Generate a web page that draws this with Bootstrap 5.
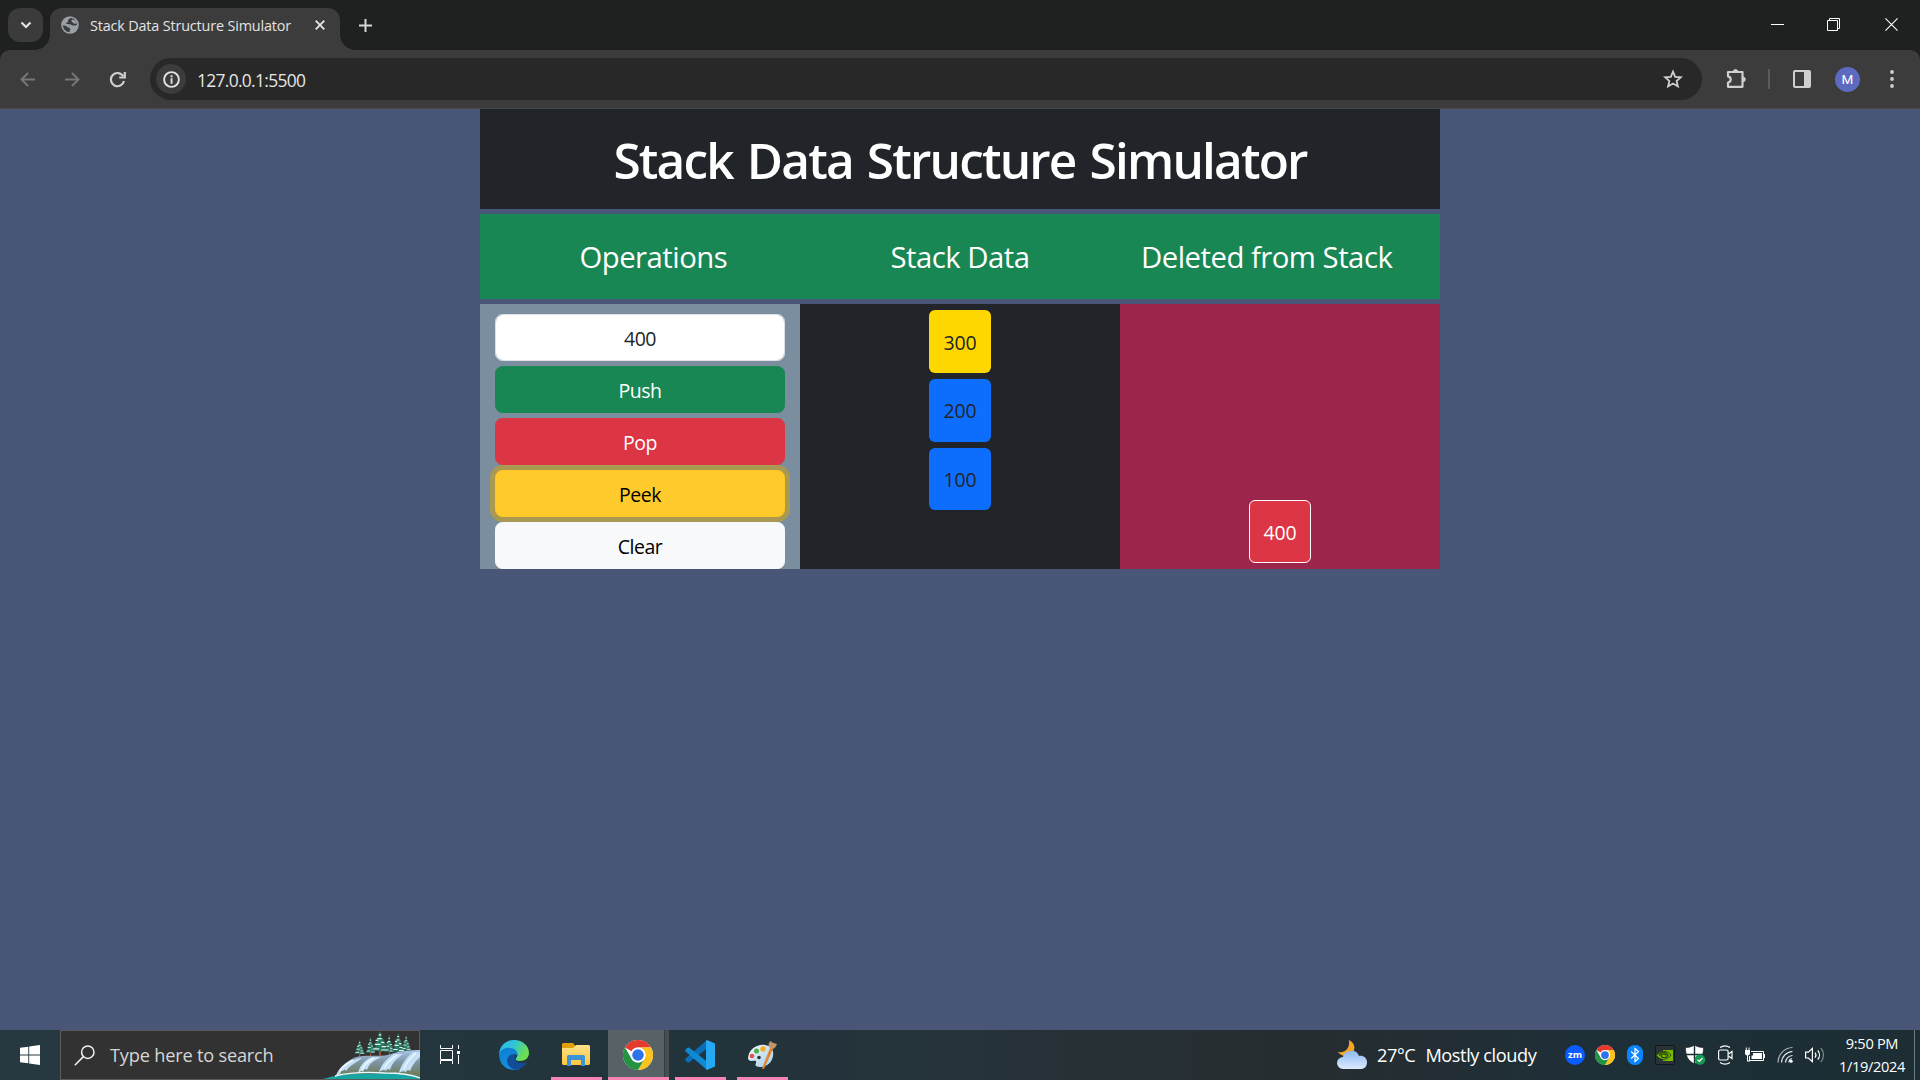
<!DOCTYPE html>
<html lang="en">
<head>
<meta charset="utf-8">
<title>Stack Data Structure Simulator</title>
<meta name="viewport" content="width=device-width, initial-scale=1">
<link href="https://cdn.jsdelivr.net/npm/bootstrap@5.3.0/dist/css/bootstrap.min.css" rel="stylesheet">
<style>
:root{font-size:20px}
body{font-family:"Open Sans","Noto Sans",sans-serif;background:#4a5678;width:1920px;height:1080px;overflow:hidden}
svg{display:block;flex:none}
.t{white-space:nowrap;display:inline-block}
/* browser chrome */
.tabstrip{height:50px;background:#1f2120;padding:8px 0 0 8px}
.tabmenu{width:35px;height:34px;border-radius:12px;background:#3b3b3b}
.tab-active{width:290px;height:42px;margin-left:7px;background:#3c3c3c;border-radius:12px 12px 0 0;padding:0 15px 8px 11px;position:relative;color:#e3e3e3}
.tab-active::before,.tab-active::after{content:"";position:absolute;bottom:0;width:15px;height:15px}
.tab-active::before{left:-15px;background:radial-gradient(circle at 0 0,transparent 14.5px,#3c3c3c 15px)}
.tab-active::after{right:-15px;background:radial-gradient(circle at 100% 0,transparent 14.5px,#3c3c3c 15px)}
.tabtitle{font-size:14.4px;line-height:20px;margin-left:11px;letter-spacing:-.16px;padding-top:1px}
.winctl{padding:10px 22px 0 0;gap:43px}
.toolbar-wrap{background:#1f2120}
.toolbar{height:59px;background:#3c3c3c;border-radius:10px 10px 0 0;border-bottom:1px solid #494949;padding:8px 21px 8px 20px}
.omni{width:1552px;height:42px;border-radius:21px;background:#282828;margin-left:24px;padding:0 19px 0 6px;color:#e6e6e6}
.siteinfo{width:30px;height:30px;border-radius:50%;background:#3c3c3c}
.url{font-size:17.4px;line-height:24px;margin-left:11px;letter-spacing:-.68px;padding-top:1px}
.avatar-m{width:25px;height:25px;border-radius:50%;background:#5c6bc0;color:#fff;font-size:13.5px;line-height:25px;font-family:Roboto,sans-serif;margin-left:24px}
/* page */
.sim{width:960px}
.sim-title{height:100px;font-size:49.5px;font-weight:600;line-height:60px;letter-spacing:-1.82px;word-spacing:3px;color:#fff;padding-top:21px}
.sim-heads{height:85px;font-size:29.3px;line-height:36px;letter-spacing:-.5px;color:#fff;padding:25px 20px 0}
.sim-body{height:265px}
.ops{background:#7b8e9f;padding:10px 15px 0}
.ops .form-control,.ops .btn{line-height:30px;height:47px;border-radius:7.5px;font-size:19.5px;letter-spacing:-.45px;padding:8px 15px 6px}
.ops .form-control{padding-top:9px}
.ops .btn-warning{background:#ffca2c;border-color:#ffc720;color:#000;box-shadow:0 0 0 5px rgba(217,164,6,.5);position:relative}
.ops .btn-light{position:relative;z-index:1}
.deleted{background:#9b254b;padding-bottom:6px}
.cellbox{width:62px;height:63px;border-radius:6px;line-height:30px;font-size:19.5px;letter-spacing:-.2px;padding-top:17px}
.cell-peek{background:gold;padding-top:18px}
.cellbox:last-child{height:62px}
.cellbox.border{height:63px;padding-top:17px}
.stackcol{padding-top:6px;gap:6px}
/* taskbar */
.taskbar{height:50px;background:linear-gradient(90deg,#263941 0,#22333b 35%,#26333a 50%,#262d30 67%,#1f2f37 82%,#1c2d34 100%);color:#fff}
.search{width:360px;height:50px;background:#323232;border:1px solid #5b5b5b;margin-left:20px;padding-left:13px;position:relative}
.search svg.art{position:absolute;right:-1px;top:0}
.searchtext{font-size:18.2px;letter-spacing:-.2px;margin-left:15px;color:#d6d6d6;padding-top:1px}
.app{height:50px;position:relative;padding-top:10px}
.app.run::after{content:"";position:absolute;left:0;right:0;bottom:0;height:3px;background:#f784b5}
.app.cur{background:linear-gradient(90deg,#576266 56px,#30393d 56px,#465054 58px)}
.weather{margin-left:10px;font-size:18.2px;letter-spacing:-.42px;padding-top:2px}
.clock{font-size:14.6px;line-height:23px;letter-spacing:-.32px;width:84px;margin-left:4px}
</style>
</head>
<body class="d-flex flex-column">
<header>
  <div class="tabstrip d-flex">
    <div class="tabmenu d-flex align-items-center justify-content-center"><svg width="12" height="8" viewBox="0 0 12 8" fill="none" stroke="#e3e3e3" stroke-width="2.200"><path d="M1.500 1.500 6 6l4.500-4.500"/></svg></div>
    <div class="tab-active d-flex align-items-center">
      <svg width="18" height="18" viewBox="0 0 18 18"><circle cx="9" cy="9" r="8.800" fill="#9aa0a8"/><path d="M10.200 1.900C8 2.300 6.800 3.600 7 5c.2 1.300-1 1.900-2.500 2 1.200 1.200 2.600 1.300 4.200 1.300 1.500 0 1.900 1.100 3 1.200 1.300.1 2.700.2 4.300-.4C15.800 5 13.400 2.300 10.200 1.900z" fill="#3c3c3c"/><path d="M11 3.500c-.8 1-.6 2.200.3 2.700 1 .4 1.100 1.300 2.300 1.500 1 .1 1.600-.2 2.200-.5C15.300 5 13.500 3.500 11 3.500z" fill="#9aa0a8"/><path d="M1.900 9.300c1.700.3 3.400.6 4.600 1.600.9.900 2.300.7 2.700 1.700.3 1.100-.6 1.700-.7 3.500C4.700 16 2 13 1.900 9.300z" fill="#3c3c3c"/></svg>
      <span class="t tabtitle">Stack Data Structure Simulator</span>
      <svg class="ms-auto" width="10" height="10" viewBox="0 0 10 10" stroke="#e3e3e3" stroke-width="1.900"><path d="M.7.7l8.600 8.600M9.300.7.7 9.300"/></svg>
    </div>
    <svg style="margin:11px 0 0 19px" width="13" height="13" viewBox="0 0 13 13" stroke="#d6d6d6" stroke-width="2"><path d="M6.500 0v13M0 6.500h13"/></svg>
    <div class="winctl ms-auto d-flex">
      <svg width="13" height="13" viewBox="0 0 13 13" stroke="#fff"><path d="M0 6.500h13"/></svg>
      <svg width="13" height="13" viewBox="0 0 13 13" stroke="#fff" fill="none"><path d="M.5 2.500h10v10H.5zM2.500 2.500v-2h10v10h-2"/></svg>
      <svg style="margin-left:2px" width="13" height="13" viewBox="0 0 14 14" stroke="#fff" stroke-width="1.200"><path d="M.5.5l13 13M13.500.5l-13 13"/></svg>
    </div>
  </div>
  <div class="toolbar-wrap"><div class="toolbar d-flex align-items-center">
    <svg width="15" height="15" viewBox="0 0 15 15" fill="none" stroke="#777" stroke-width="1.900"><path d="M15 7.500H1.500M8 1 1.500 7.500 8 14"/></svg>
    <svg style="margin-left:30px" width="15" height="15" viewBox="0 0 15 15" fill="none" stroke="#777" stroke-width="1.900"><path d="M0 7.500h13.500M7 1l6.500 6.500L7 14"/></svg>
    <svg style="margin-left:29px" width="17" height="17" viewBox="0 0 17 17" fill="none" stroke="#cfcfcf" stroke-width="2.200"><path d="M14.200 5.200A6.600 6.600 0 1 0 15 10"/><path d="M15.800 1v5.500h-5.600"/></svg>
    <div class="omni d-flex align-items-center">
      <div class="siteinfo d-flex align-items-center justify-content-center"><svg width="17" height="17" viewBox="0 0 17 17"><circle cx="8.500" cy="8.500" r="7.400" fill="none" stroke="#e3e3e3" stroke-width="1.900"/><path d="M7.600 7.300h1.900v5.400H7.600zM7.600 4.300h1.900v1.900H7.600z" fill="#e3e3e3"/></svg></div>
      <span class="t url">127.0.0.1:5500</span>
      <svg class="ms-auto" width="20" height="20" viewBox="0 0 20 20" fill="none" stroke="#cfcfcf" stroke-width="1.800"><path d="M10 2.600l2.200 5.200 5.600.5-4.200 3.700 1.300 5.500L10 14.600l-4.900 2.900L6.400 12 2.200 8.300l5.600-.5z"/></svg>
    </div>
    <svg style="margin-left:24px" width="22" height="22" viewBox="0 0 22 22" fill="none" stroke="#cfcfcf" stroke-width="2.200" stroke-linejoin="round"><path d="M2 4h14.500v14.800H2v-4.200c3.600-.6 3.600-5.600 0-6.200z"/><path d="M7 3.500a2.600 2.600 0 0 1 5 0zM17.500 9v4.800a2.500 2.500 0 0 0 0-4.800z" fill="#cfcfcf" stroke-width="1"/></svg>
    <div style="width:2px;height:20px;background:#5c5c5c;margin-left:20px"></div>
    <svg style="margin-left:23px" width="18" height="18" viewBox="0 0 18 18"><rect x="1" y="1" width="16" height="16" rx="1" fill="none" stroke="#cfcfcf" stroke-width="2"/><path d="M11 1h6v16h-6z" fill="#cfcfcf"/></svg>
    <div class="avatar-m text-center">M</div>
    <svg class="ms-auto" width="14" height="18" viewBox="0 0 14 18" fill="#cfcfcf"><circle cx="7" cy="2" r="1.900"/><circle cx="7" cy="9" r="1.900"/><circle cx="7" cy="16" r="1.900"/></svg>
  </div></div>
</header>

<main class="flex-grow-1">
  <div class="sim mx-auto">
    <div class="sim-title bg-dark text-center"><span class="t">Stack Data Structure Simulator</span></div>
    <div class="row g-0 sim-heads bg-success mt-1 text-center">
      <div class="col-4"><span class="t">Operations</span></div>
      <div class="col-4"><span class="t">Stack Data</span></div>
      <div class="col-4"><span class="t">Deleted from Stack</span></div>
    </div>
    <div class="row g-0 sim-body mt-1">
      <div class="col-4 ops">
        <div class="form-control text-center"><span class="t">400</span></div>
        <button class="btn btn-success w-100 mt-1 d-block"><span class="t">Push</span></button>
        <button class="btn btn-danger w-100 mt-1 d-block"><span class="t">Pop</span></button>
        <button class="btn btn-warning w-100 mt-1 d-block"><span class="t">Peek</span></button>
        <button class="btn btn-light w-100 mt-1 d-block"><span class="t">Clear</span></button>
      </div>
      <div class="col-4 bg-dark stackcol d-flex flex-column align-items-center">
        <div class="cellbox cell-peek text-center"><span class="t">300</span></div>
        <div class="cellbox bg-primary text-center"><span class="t">200</span></div>
        <div class="cellbox bg-primary text-center"><span class="t">100</span></div>
      </div>
      <div class="col-4 deleted d-flex flex-column align-items-center justify-content-end">
        <div class="cellbox bg-danger border border-white text-white text-center"><span class="t">400</span></div>
      </div>
    </div>
  </div>
</main>

<footer class="taskbar d-flex">
  <svg style="margin:15px 0 0 20px" width="20" height="20" viewBox="0 0 20 20" fill="#fff"><path d="M0 2.800 8.300 1.700v7.800H0zM9.200 1.500 20 0v9.500H9.200zM0 10.500h8.300v7.800L0 17.200zM9.200 10.500H20V20L9.200 18.500z"/></svg>
  <div class="search d-flex align-items-center">
    <svg width="21" height="21" viewBox="0 0 21 21" fill="none" stroke="#f2f2f2" stroke-width="1.500"><circle cx="13.800" cy="7.200" r="6.200"/><path d="M9.400 11.600.8 20.200"/></svg>
    <span class="t searchtext">Type here to search</span>
    <svg class="art" width="97" height="48" viewBox="0 0 97 48">
      <defs><linearGradient id="fall" x1="0" y1="0" x2="0" y2="1"><stop offset="0" stop-color="#a9c9ec"/><stop offset=".45" stop-color="#7d93a0"/><stop offset="1" stop-color="#6a7a50"/></linearGradient>
      <g id="tree"><path d="M10 20v6" stroke="#b0562c" stroke-width="1.600"/><path d="M10 0l2 5-1.500.5L14.500 10l-2.500.3 4.500 4.500-3 .4 4.500 5.300c-2 1-4-.5-5.500.7-1.500.6-2.500.6-4 0C7 20 5 21.500 2 20.500l4.500-5.300-3-.4L8 10.300 5.500 10l4-4.500L8 5z" fill="#2a7a60"/><path d="M9 4h2M7.500 8h4M6 9.800h2.500M11 12h3M5.500 14h5M3.800 18.800h5.500M11.500 16.500h4M11 20h6" stroke="#dff0f8" stroke-width="1.300"/></g></defs>
      <use href="#tree" transform="translate(30,9) scale(.66)"/><use href="#tree" transform="translate(41.500,6) scale(.6,.75)"/><use href="#tree" transform="translate(60,4) scale(.62,.8)"/><use href="#tree" transform="translate(67,2) scale(.82,.88)"/><use href="#tree" transform="translate(77,4) scale(.62,.72)"/><use href="#tree" transform="translate(46,0) scale(1.100,.95)"/>
      <path d="M11 46c5-4 6-11 13-15 5-4 10-6 16-6 10-1 20 1 28-2 8-3 20-4 29-4v27z" fill="url(#fall)"/>
      <path d="M13 45c2-7 7-12 15-15 4-2 8-3 11-3-6 5-12 7-16 13-1-2-2-2-3 0-1-1-2 0-3 3zM35 43c1-7 5-13 14-17h9c-8 4-12 7-14 13-2-2-3-1-4 2-1-2-3-1-5 2zM56 41c2-7 7-13 15-18h9c-7 5-11 9-13 16-2-2-3-1-4 1-2-2-4-1-7 1zM76 42c2-8 6-14 14-21h7v5c-5 4-8 9-10 14-2-2-3-1-4 1-2-1-4-1-7 1z" fill="#c5dff7"/>
      <path d="M17 40c3-5 7-8 13-11M39 39c2-5 6-9 12-12M61 37c3-5 7-9 13-13M81 38c2-6 6-11 12-16" stroke="#f1f9ff" stroke-width="1.400" fill="none"/>
      <path d="M0 48c12-4 25-5 38-5 18-1 42-1 59 3v2z" fill="#17a5a4"/>
      <path d="M12 45c16-4 36-4 50-3 14 0 25 1 35 5" stroke="#eaf8ff" stroke-width="1.300" fill="none"/>
    </svg>
  </div>
  <svg style="margin:15px 0 0 20px" width="20" height="20" viewBox="0 0 20 20" fill="none" stroke="#fff"><path d="M.5 0v3.500h12V0M.5 5.500h12v9H.5zM.5 19v-3.500h12V19M18.500 0v4M18.500 10v9"/><path d="M17 6h3v3h-3z" fill="#fff" stroke="none"/></svg>
  <div class="app" style="margin-left:39px"><svg width="30" height="30" viewBox="0 0 30 30"><defs><linearGradient id="e1" x1="0" y1="0" x2="1" y2=".4"><stop offset="0" stop-color="#2cb5ee"/><stop offset=".5" stop-color="#2fc5d8"/><stop offset="1" stop-color="#6ee04c"/></linearGradient><linearGradient id="e2" x1="0" y1="0" x2=".3" y2="1"><stop offset="0" stop-color="#0f7ed0"/><stop offset="1" stop-color="#1490df"/></linearGradient></defs>
    <path d="M0 14C1 5 7 0 15 0c9 0 15 6 15 13 0 5-4 8-9 8-3 0-5-1-4-3 3-3 1-8-4-9C8 7 3 9 0 14z" fill="url(#e1)"/><path d="M0 14C2 9 7 7 11 8c5 0 8 4 7 7-3-2-6 1-6 5 0 5 4 8 9 9-2 1-4 1-6 1C6 30 0 23 0 14z" fill="url(#e2)"/><path d="M17 15c-4-2-9 1-9 6 0 4 4 8 9 9 5-1 9-4 11-8-7 3-14-1-11-7z" fill="#104c97"/></svg></div>
  <div class="app run d-flex justify-content-center" style="width:51px;margin-left:22px"><svg style="margin:3px 0 0 -1px" width="28" height="24" viewBox="0 0 28 24"><defs><linearGradient id="fo" x1="0" y1="0" x2="0" y2="1"><stop offset="0" stop-color="#ffe28a"/><stop offset="1" stop-color="#fbc63d"/></linearGradient></defs><path d="M1 0h10l2 2.500V8H0V1z" fill="#e0a10a"/><path d="M0 5h11l3-3h13l1 1v18l-1 1H1l-1-1z" fill="url(#fo)"/><path d="M5 23V13l1-1h16l1 1v10h-4v-6H9v6z" fill="#3c93d8"/></svg></div>
  <div class="app run cur" style="width:61px;margin-left:6px;padding-left:15px"><svg width="30" height="30" viewBox="0 0 48 48"><g id="chrome"><circle cx="24" cy="24" r="24" fill="#fff"/><path d="M3.200 12A24 24 0 0 1 44.800 12H24a12 12 0 0 0-10.400 6z" fill="#e33b2e"/><path d="M44.800 12A24 24 0 0 1 24 48l10.400-18A12 12 0 0 0 24 12z" fill="#fcc31e"/><path d="M24 48A24 24 0 0 1 3.200 12l10.400 18A12 12 0 0 0 34.400 30z" fill="#229342"/><circle cx="24" cy="24" r="12" fill="#fff"/><circle cx="24" cy="24" r="9.300" fill="#2d74e8"/></g></svg></div>
  <div class="app run" style="width:51px;margin-left:6px;padding-left:10px"><svg width="30" height="30" viewBox="0 0 30 30"><path d="M22 0v8.500L4 22.500l-1.200 0L.3 20.500v-1.700z" fill="#0a6fb8"/><path d="M22 30v-8.500L4 7.500H2.800L.3 9.500v1.700z" fill="#1089d3"/><path d="M22 0l8 3.500v23L22 30l-1-1V1z" fill="#25a9f2"/></svg></div>
  <div class="app run" style="width:51px;margin-left:11px;padding-left:10px"><svg width="30" height="30" viewBox="0 0 30 30"><defs><linearGradient id="pa" x1="0" y1="0" x2="1" y2="1"><stop offset="0" stop-color="#eef7fc"/><stop offset="1" stop-color="#a5cfe8"/></linearGradient></defs><path d="M1 18C2 9 10 4 18 5c7 1 9 6 8 11-1 7-7 11-13 11-5 0-5-2-4-4 1-3-2-2-4-2-3 0-4-1-4-3z" fill="url(#pa)"/><circle cx="5" cy="16" r="2.300" fill="#e5504c"/><circle cx="9.500" cy="11" r="2.500" fill="#52ac4c"/><circle cx="16" cy="9" r="2.700" fill="#f9a91c"/><circle cx="12" cy="17.500" r="1.800" fill="#26343c"/><path d="M23 8l3 1-9 20-2-.5z" fill="#e5832b"/><path d="M22 7c-1-3 0-5 2-6l1 1.500L30 4c-1 3-3 5-5 5z" fill="#c29566"/></svg></div>

  <svg style="margin:10px 0 0 549px" width="30" height="30" viewBox="0 0 30 30"><defs><linearGradient id="cl" x1="0" y1="0" x2="0" y2="1"><stop offset="0" stop-color="#8db9f5"/><stop offset="1" stop-color="#dce9fb"/></linearGradient></defs><path d="M12 0c6 3 7 9 3 13-4 4-10 4-14-1 8 1 12-4 11-12z" fill="#f5a623"/><path d="M6 29a6 6 0 0 1 0-12c1-4 4-6 8-6 4-1 7 2 8 5 4-1 8 2 8 6 0 5-3 7-6 7z" fill="url(#cl)"/></svg>
  <div class="weather d-flex align-items-center"><span class="t">27°C</span><span class="t" style="margin-left:10px">Mostly cloudy</span></div>
  <div class="d-flex align-items-center ms-auto">
    <svg width="20" height="20" viewBox="0 0 20 20"><circle cx="10" cy="10" r="10" fill="#0b5cff"/><text x="10" y="13.200" text-anchor="middle" font-family="Open Sans" font-weight="700" font-size="9.500" fill="#fff">zm</text></svg>
    <svg style="margin-left:10px" width="20" height="20" viewBox="0 0 48 48"><use href="#chrome"/></svg>
    <svg style="margin-left:12px" width="16" height="20" viewBox="0 0 16 20"><rect width="16" height="20" rx="7.500" fill="#0a84ff"/><path d="M4.200 6.500l7.300 7L8 16.500v-13l3.500 3-7.300 7" fill="none" stroke="#fff" stroke-width="1.200"/></svg>
    <svg style="margin-left:12px" width="20" height="20" viewBox="0 0 20 20"><rect x=".5" y=".5" width="19" height="19" rx="1" fill="#2b3236" stroke="#11181b"/><path d="M8 5h10v11H8z" fill="#76b900"/><path d="M1.500 10.500C5 5 12 5 16 10 12 16 5 15.500 1.500 10.500z" fill="#76b900" stroke="#2b4a08" stroke-width="1"/><path d="M4 10.500c2-4 7-4 9 0-2 3-6 3-7 0 1-2 4-2 5 0" fill="none" stroke="#253d0a" stroke-width="1.200"/></svg>
    <svg style="margin-left:10px" width="21" height="20" viewBox="0 0 21 20"><path d="M9.500 0c3 2 6 2.500 9 2.500 0 8-2 13-9 16.500C2.500 15.500.5 10.500.5 2.500c3 0 6-.5 9-2.500z" fill="#fff" stroke="#111" stroke-width=".6"/><path d="M9.500 0v19M.8 9.500H18" stroke="#1c2b31" stroke-width="1.400"/><circle cx="15" cy="14.500" r="5.300" fill="#159a54"/><path d="M12.500 14.600l1.800 1.800 3.200-3.400" fill="none" stroke="#fff" stroke-width="1.200"/></svg>
    <svg style="margin-left:12px" width="15" height="20" viewBox="0 0 15 20" fill="none" stroke="#fff" stroke-width="1.200"><rect x=".6" y="5" width="9.500" height="10" rx="1.500"/><path d="M10.500 9l3.500-2.500v7L10.500 11M2 2.500c3-2 7-2 10 0M2 17.500c3 2 7 2 10 0"/></svg>
    <svg style="margin-left:12px" width="20" height="16" viewBox="0 0 20 16"><path d="M6 4.500h12.500v9H4.500V9" fill="none" stroke="#fff"/><path d="M8 6h9v6H6.500V8.500H8z" fill="#fff"/><path d="M18.500 7H20v4h-1.500M0 3h5v3a2.500 2.500 0 0 1-5 0zM.8.5h1V3h-1zM3.500.5h1V3h-1zM2 8h1v5.500h2v1H2z" fill="#fff"/></svg>
    <svg style="margin-left:12px" width="17" height="18" viewBox="0 0 17 18" fill="none" stroke="#e9eef0" stroke-width="1.200"><path d="M12 16.500a4 4 0 0 1 3-4M8.500 16.500a7.500 7.500 0 0 1 7-7M4.500 16.500a11.500 11.500 0 0 1 11-11"/><path d="M1 16.500A15 15 0 0 1 15.500 1.500" opacity=".7"/><circle cx="14.200" cy="15.200" r="1.500" fill="#fff" stroke="none"/></svg>
    <svg style="margin-left:11px" width="21" height="16" viewBox="0 0 21 16" fill="none" stroke="#fff" stroke-width="1.200"><path d="M.6 5.200h2.800L7.400 1.400v13.200L3.400 11H.6zM10 5.500a4 4 0 0 1 0 5M12.800 3.500a7 7 0 0 1 0 9"/><path d="M15.800 1a10.500 10.500 0 0 1 0 14" stroke="#7f8a8f"/></svg>
    <div class="clock text-center"><div><span class="t">9:50 PM</span></div><div><span class="t">1/19/2024</span></div></div>
    <div style="width:1px;height:50px;background:#6d787d;margin-right:5px"></div>
  </div>
</footer>
<script src="https://cdn.jsdelivr.net/npm/bootstrap@5.3.0/dist/js/bootstrap.bundle.min.js"></script>
</body>
</html>
